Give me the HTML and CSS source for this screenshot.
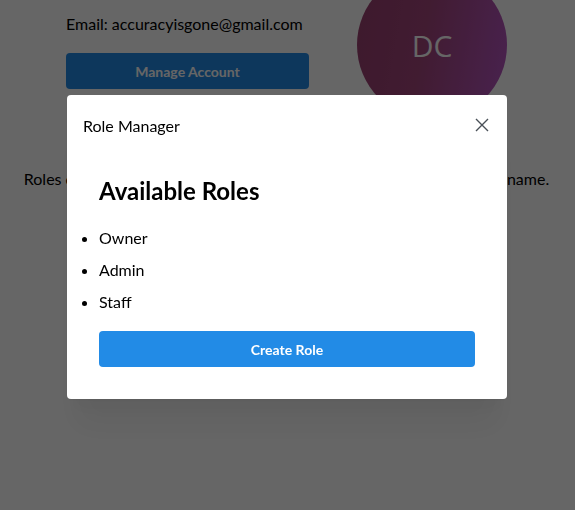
FILE: index.html
```html
<!DOCTYPE html>
<html lang="en">
<head>
  <meta charset="UTF-8" />
  <meta name="viewport" content="width=device-width, initial-scale=1.0" />
  <title>Account</title>
  <link rel="stylesheet" href="styles.css">
</head>
<body>
  <main class="page">
    <section class="profile">
      <div class="profile-info">
        <p class="email">Email: accuracyisgone@gmail.com</p>
        <button class="btn btn-manage">Manage Account</button>
      </div>
      <div class="avatar">DC</div>
    </section>
    <p class="roles-note">Roles control what each member can do in your server. Pick one by a name.</p>
  </main>

  <div class="overlay"></div>
  <div class="modal-wrap">
    <div class="modal">
      <div class="modal-header">
        <span class="modal-title">Role Manager</span>
        <button class="close" aria-label="Close">
          <svg width="14" height="14" viewBox="0 0 14 14" fill="none" stroke="#495057" stroke-width="1.4">
            <path d="M1 1 L13 13 M13 1 L1 13" />
          </svg>
        </button>
      </div>
      <div class="modal-body">
        <div class="roles">
          <h2>Available Roles</h2>
          <ul class="role-list">
            <li>Owner</li>
            <li>Admin</li>
            <li>Staff</li>
          </ul>
          <button class="btn btn-create">Create Role</button>
        </div>
      </div>
    </div>
  </div>
</body>
</html>
```

FILE: styles.css
```css
body {
  font-family: Lato, "Noto Sans", sans-serif;
  background: #fff;
  color: #000;
  margin: 0;
  padding: 0;
  overflow: hidden;
}
.page {
  margin-top: -30px;
  padding-right: 2px;
}
.profile {
  display: flex;
  justify-content: center;
  gap: 48px;
}
.profile-info {
  padding-top: 42px;
}
.email {
  margin: 0 0 17px;
  font-size: 16px;
  line-height: 24px;
}
.btn {
  border: none;
  border-radius: 4px;
  color: white;
  font-family: inherit;
  font-weight: 700;
  font-size: 14px;
  height: 36px;
  cursor: pointer;
}
.btn-manage {
  width: 243px;
  background: #228be6;
}
.avatar {
  width: 150px;
  height: 150px;
  border-radius: 50%;
  background: linear-gradient(100deg, #9a4070 0%, #a3467c 45%, #b656c6 100%);
  color: #fff;
  display: flex;
  align-items: center;
  justify-content: center;
  font-size: 30px;
  font-family: "Open Sans", sans-serif;
}
.roles-note {
  text-align: center;
  font-size: 16px;
  margin: 49px 0 0;
}
.overlay {
  position: fixed;
  inset: 0;
  background: rgba(0,0,0,0.6);
}
.modal-wrap {
  position: fixed;
  inset: 0;
  display: flex;
  justify-content: center;
  padding: 95px 1px 0 0;
}
.modal {
  width: 440px;
  height: 304px;
  background: white;
  border-radius: 4px;
  box-shadow: 0 1px 3px rgba(0,0,0,0.05), 0 36px 28px -7px rgba(0,0,0,0.05), 0 17px 17px -7px rgba(0,0,0,0.04);
}
.modal-header {
  height: 60px;
  padding: 0 16px;
  display: flex;
  align-items: center;
  justify-content: space-between;
}
.modal-title {
  font-size: 16px;
}
.close {
  width: 18px;
  height: 18px;
  padding: 0;
  border: none;
  background: none;
  display: flex;
  align-items: center;
  justify-content: center;
}
.modal-body {
  padding: 0 16px 16px;
}
.roles {
  padding: 0 16px 16px;
}
.roles h2 {
  font-size: 24px;
  line-height: 29px;
  margin: 21px 0 17px;
}
.role-list {
  margin: 0 0 13px;
  padding: 0;
  font-size: 16px;
}
.role-list li {
  line-height: 32px;
}
.btn-create {
  width: 100%;
  background: #228be6;
}
```
